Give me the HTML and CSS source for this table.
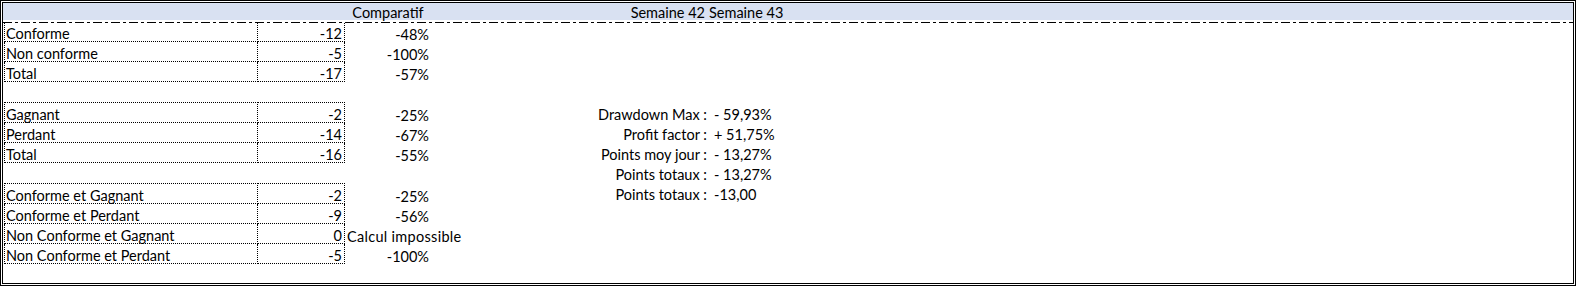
FILE: index.html
```
<!DOCTYPE html>
<html lang="fr">
<head>
<meta charset="utf-8">
<title>Comparatif</title>
<link rel="stylesheet" href="styles.css">
</head>
<body>
<div class="frame">
  <div class="header">
    <div class="h-a"></div>
    <div class="h-c">Comparatif</div>
    <div class="h-d">Semaine 42</div>
    <div class="h-e">Semaine 43</div>
  </div>
  <div class="dashline"></div>
  <div class="content">
    <div class="tables">
      <div class="group first">
        <div class="row"><div class="cell a">Conforme</div><div class="cell b">-12</div><div class="cell c">-48%</div></div>
        <div class="row"><div class="cell a">Non conforme</div><div class="cell b">-5</div><div class="cell c">-100%</div></div>
        <div class="row"><div class="cell a">Total</div><div class="cell b">-17</div><div class="cell c">-57%</div></div>
      </div>
      <div class="group boxed">
        <div class="row"><div class="cell a">Gagnant</div><div class="cell b">-2</div><div class="cell c">-25%</div></div>
        <div class="row"><div class="cell a">Perdant</div><div class="cell b">-14</div><div class="cell c">-67%</div></div>
        <div class="row"><div class="cell a">Total</div><div class="cell b">-16</div><div class="cell c">-55%</div></div>
      </div>
      <div class="group boxed">
        <div class="row"><div class="cell a">Conforme et Gagnant</div><div class="cell b">-2</div><div class="cell c">-25%</div></div>
        <div class="row"><div class="cell a">Conforme et Perdant</div><div class="cell b">-9</div><div class="cell c">-56%</div></div>
        <div class="row"><div class="cell a">Non Conforme et Gagnant</div><div class="cell b">0</div><div class="cell c text">Calcul impossible</div></div>
        <div class="row"><div class="cell a">Non Conforme et Perdant</div><div class="cell b">-5</div><div class="cell c">-100%</div></div>
      </div>
    </div>
    <div class="metrics">
      <div class="m-label">Drawdown Max :</div><div class="m-value">- 59,93%</div>
      <div class="m-label">Profit factor :</div><div class="m-value">+ 51,75%</div>
      <div class="m-label">Points moy jour :</div><div class="m-value">- 13,27%</div>
      <div class="m-label">Points totaux :</div><div class="m-value">- 13,27%</div>
      <div class="m-label">Points totaux :</div><div class="m-value">-13,00</div>
    </div>
  </div>
</div>
</body>
</html>
```
FILE: styles.css
```
* {
  box-sizing: border-box;
  margin: 0;
  padding: 0;
}

body {
  margin: 0;
  background: #fff;
  font-family: Lato, "Liberation Sans", sans-serif;
  font-size: 14.5px;
  color: #000;
}

.frame {
  width: 1576px;
  height: 286px;
  border: 3px double #000;
}

.header {
  display: grid;
  grid-template-columns: 342px 86px 276px 200px;
  height: 17px;
  background: #d9e1f2;
  line-height: 14px;
  white-space: nowrap;
}

.header > div {
  display: flex;
  align-items: flex-end;
}

.h-c { justify-content: center; }
.h-d { justify-content: flex-end; padding-right: 2px; }
.h-e { padding-left: 2px; }

.dashline {
  height: 1px;
  margin-top: 2px;
  background: repeating-linear-gradient(to right, #000 0 9px, transparent 9px 12px, #000 12px 15px, transparent 15px 18px);
}

.content {
  display: flex;
}

.tables {
  margin-left: 1px;
  width: 427px;
  flex: none;
}

.group + .group {
  margin-top: 20px;
}

.row {
  display: grid;
  grid-template-columns: 254px 87px 86px;
  height: 20px;
  line-height: 15px;
  white-space: nowrap;
}

.group.first .row:first-child {
  height: 19px;
}

.group.boxed .row:first-child {
  height: 21px;
}

.cell {
  display: flex;
  align-items: flex-end;
}

.cell.a {
  border-left: 1px dotted #000;
  border-right: 1px dotted #000;
  border-bottom: 1px dotted #000;
  padding-left: 1px;
}

.cell.b {
  border-right: 1px dotted #000;
  border-bottom: 1px dotted #000;
  justify-content: flex-end;
  padding-right: 2px;
}

.group.boxed .row:first-child .cell.a,
.group.boxed .row:first-child .cell.b {
  border-top: 1px dotted #000;
}

.cell.c {
  justify-content: flex-end;
  padding-right: 2px;
}

.cell.c.text {
  justify-content: flex-start;
  padding-right: 0;
  padding-left: 2px;
  letter-spacing: 0.3px;
  overflow: visible;
}

.metrics {
  margin-top: 80px;
  display: grid;
  grid-template-columns: 276px 200px;
  grid-auto-rows: 20px;
  line-height: 15px;
  white-space: nowrap;
}

.metrics > div {
  display: flex;
  align-items: flex-end;
  padding-bottom: 1px;
}

.m-label {
  justify-content: flex-end;
  padding-right: 0;
}

.m-value {
  padding-left: 7px;
}
```
